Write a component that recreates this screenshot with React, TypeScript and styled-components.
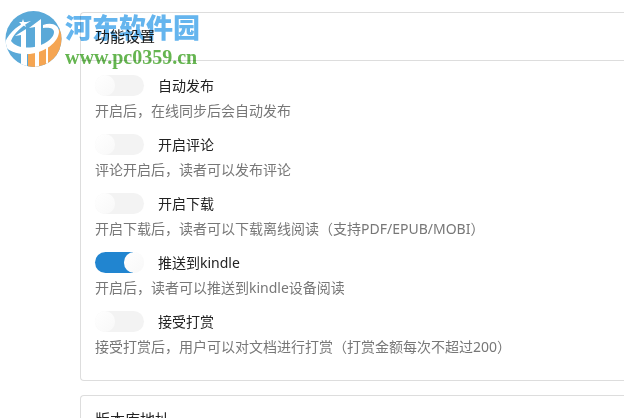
import React, { useState } from "react";
import styled, { createGlobalStyle } from "styled-components";

const GlobalStyle = createGlobalStyle`
  * { box-sizing: border-box; }
  body {
    margin: 0;
    background: #fff;
    overflow: hidden;
    font-family: "Noto Sans", "Noto Sans CJK SC", sans-serif;
    font-size: 14px;
    color: #222;
  }
`;

const Page = styled.main`
  position: relative;
  display: flex;
  flex-direction: column;
  gap: 14px;
  padding: 12px 0 0 80px;
  height: 100vh;
  overflow: hidden;
`;

const Card = styled.section`
  flex: none;
  border: 1px solid #ddd;
  border-right: 0;
  border-radius: 4px 0 0 4px;
`;

const CardHeader = styled.header`
  padding: 12px 14px;
  border-bottom: 1px solid #ddd;
`;

const Title = styled.h2`
  margin: 0;
  font-size: 15px;
  line-height: 23px;
  font-weight: 400;
`;

const Options = styled.div`
  display: flex;
  flex-direction: column;
  gap: 12px;
  padding: 14px 14px 22px;
`;

const Option = styled.div`
  display: flex;
  flex-direction: column;
  gap: 3px;
`;

const OptionLabel = styled.label`
  display: flex;
  align-items: flex-start;
  gap: 14px;
  line-height: 22px;
  cursor: pointer;
`;

const Switch = styled.input`
  appearance: none;
  flex: none;
  display: flex;
  width: 49px;
  height: 21px;
  margin: 0;
  border-radius: 11px;
  background: #f3f3f3;
  cursor: pointer;

  &::before {
    content: "";
    width: 20px;
    height: 21px;
    border-radius: 11px;
    background: linear-gradient(135deg, #fff, #f8f8f8);
  }

  &:checked {
    justify-content: flex-end;
    background: linear-gradient(90deg, #2185d0 38px, #f8f8f8 38px);
  }
`;

const Description = styled.p`
  margin: 0;
  line-height: 22px;
  color: #777;
`;

const Watermark = styled.div`
  position: absolute;
  top: 10px;
  left: 5px;
  display: flex;
  gap: 3px;
  mix-blend-mode: multiply;
  pointer-events: none;
`;

const WatermarkText = styled.div`
  display: flex;
  flex-direction: column;
`;

const SiteName = styled.span`
  font: 900 27px/34px "Noto Sans CJK SC", sans-serif;
  color: #65b5ee;
`;

const SiteAddress = styled.span`
  font: 700 20px/26px "Liberation Serif", serif;
  color: #65b550;
`;

const Logo = () => (
  <svg width="57" height="58" viewBox="0 0 57 58" aria-hidden="true">
    <defs>
      <clipPath id="disc">
        <circle cx="28.5" cy="29" r="28" />
      </clipPath>
    </defs>
    <g clipPath="url(#disc)">
      <rect width="57" height="58" fill="#5aa9d8" />
      <path d="M23 41C38 40 49 33 53 20L57 18V58H23Z" fill="#f5a552" />
      <g fill="#fff">
        <path d="M0 32C5 22 14 13 26 11C17 16 9 23 6 31C11 38 23 39 33 36C43 33 49 27 49 22C49 18 44 17 38 18V15C47 12 54 15 54 22C53 33 40 42 25 44C13 45 3 41 0 36Z" />
        <path d="M10 26L21 19V39H16V25Z" />
        <path d="M24 18L36 9V38H30V17Z" />
        <path d="M16 42H22V58H16ZM30 41H34V58H30ZM41 37H43V56H41Z" />
        <path d="M18 9L19 12L22 12L20 14L21 17L18 15L15 17L16 14L14 12L17 12Z" />
      </g>
    </g>
  </svg>
);

const options = [
  { id: "publish", label: "自动发布", description: "开启后，在线同步后会自动发布", on: false },
  { id: "comment", label: "开启评论", description: "评论开启后，读者可以发布评论", on: false },
  {
    id: "download",
    label: "开启下载",
    description: "开启下载后，读者可以下载离线阅读（支持PDF/EPUB/MOBI）",
    on: false,
  },
  { id: "kindle", label: "推送到kindle", description: "开启后，读者可以推送到kindle设备阅读", on: true },
  {
    id: "reward",
    label: "接受打赏",
    description: "接受打赏后，用户可以对文档进行打赏（打赏金额每次不超过200）",
    on: false,
  },
];

export default function App() {
  const [enabled, setEnabled] = useState<Record<string, boolean>>(
    Object.fromEntries(options.map((o) => [o.id, o.on]))
  );

  return (
    <>
      <GlobalStyle />
      <Page>
        <Card>
          <CardHeader>
            <Title>功能设置</Title>
          </CardHeader>
          <Options>
            {options.map((o) => (
              <Option key={o.id}>
                <OptionLabel htmlFor={o.id}>
                  <Switch
                    id={o.id}
                    type="checkbox"
                    role="switch"
                    aria-describedby={`${o.id}-description`}
                    checked={enabled[o.id]}
                    onChange={(e) => setEnabled({ ...enabled, [o.id]: e.target.checked })}
                  />
                  {o.label}
                </OptionLabel>
                <Description id={`${o.id}-description`}>{o.description}</Description>
              </Option>
            ))}
          </Options>
        </Card>
        <Card>
          <CardHeader>
            <Title>版本库地址</Title>
          </CardHeader>
        </Card>
        <Watermark>
          <Logo />
          <WatermarkText>
            <SiteName>河东软件园</SiteName>
            <SiteAddress>www.pc0359.cn</SiteAddress>
          </WatermarkText>
        </Watermark>
      </Page>
    </>
  );
}
